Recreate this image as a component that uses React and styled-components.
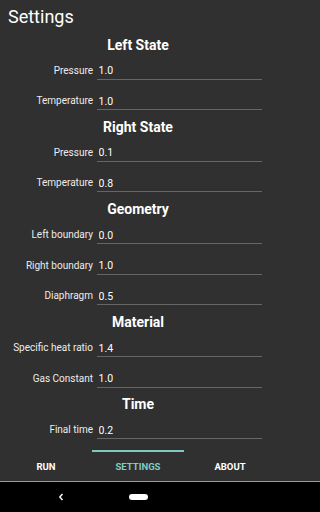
import React from 'react'
import styled, { createGlobalStyle } from 'styled-components'

const GlobalStyle = createGlobalStyle`
  html, body {
    margin: 0;
    padding: 0;
    background: #303030;
  }
  body {
    font-family: Roboto, 'Noto Sans', 'Liberation Sans', sans-serif;
    color: #fff;
  }
`

const Screen = styled.div`
  display: flex;
  flex-direction: column;
  min-width: 276px;
  height: 512px;
  overflow: hidden;
  background: #303030;
`

const Content = styled.div`
  flex: 1 1 auto;
  width: 276px;
  min-height: 0;
  overflow: hidden;
`

const Title = styled.h1`
  margin: 0;
  padding: 5px 0 5.5px 8px;
  font-size: 18px;
  line-height: 24px;
  font-weight: 400;
  color: #fff;
`

const SectionTitle = styled.h2`
  margin: 0;
  height: 21px;
  font-size: 14px;
  line-height: 21px;
  font-weight: 700;
  text-align: center;
  color: #fff;
`

const Row = styled.label`
  display: flex;
  align-items: flex-start;
  height: 30.67px;
`

const Label = styled.span`
  width: 93px;
  padding-top: 9px;
  font-size: 10px;
  line-height: 12px;
  text-align: right;
  color: #ececec;
  white-space: nowrap;
`

const Input = styled.input`
  box-sizing: border-box;
  width: 165px;
  height: 24px;
  margin: 0 0 0 4px;
  padding: 7px 0 0 1.5px;
  border: none;
  border-bottom: 1px solid #666;
  border-radius: 0;
  background: transparent;
  font-family: inherit;
  font-size: 10.5px;
  line-height: 12px;
  color: #fff;
  outline: none;
`

const TabBar = styled.nav`
  display: grid;
  grid-template-columns: repeat(3, 1fr);
  flex: 0 0 31px;
  width: 276px;
  background: #303030;
`

const Tab = styled.div`
  display: flex;
  align-items: center;
  justify-content: center;
  border-top: 2px solid ${({ active }) => (active ? '#7ec8c0' : 'transparent')};
  font-size: 9.5px;
  font-weight: 700;
  text-transform: uppercase;
  color: ${({ active }) => (active ? '#80cbc4' : '#fff')};
`

const SystemNav = styled.div`
  display: grid;
  grid-template-columns: 122px 32px;
  align-items: center;
  flex: 0 0 30px;
  border-top: 1px solid #9a9a9a;
  background: #000;
`

const NavSlot = styled.div`
  display: flex;
  align-items: center;
  justify-content: center;
`

const HomePill = styled.div`
  width: 19px;
  height: 6px;
  border-radius: 3px;
  background: #fff;
`

const sections = [
  {
    title: 'Left State',
    fields: [
      ['Pressure', '1.0'],
      ['Temperature', '1.0'],
    ],
  },
  {
    title: 'Right State',
    fields: [
      ['Pressure', '0.1'],
      ['Temperature', '0.8'],
    ],
  },
  {
    title: 'Geometry',
    fields: [
      ['Left boundary', '0.0'],
      ['Right boundary', '1.0'],
      ['Diaphragm', '0.5'],
    ],
  },
  {
    title: 'Material',
    fields: [
      ['Specific heat ratio', '1.4'],
      ['Gas Constant', '1.0'],
    ],
  },
  {
    title: 'Time',
    fields: [['Final time', '0.2']],
  },
]

const tabs = ['Run', 'Settings', 'About']

export default function App() {
  return (
    <Screen>
      <GlobalStyle />
      <Content>
        <Title>Settings</Title>
        {sections.map((section) => (
          <section key={section.title}>
            <SectionTitle>{section.title}</SectionTitle>
            {section.fields.map(([label, value]) => (
              <Row key={label}>
                <Label>{label}</Label>
                <Input defaultValue={value} />
              </Row>
            ))}
          </section>
        ))}
      </Content>
      <TabBar>
        {tabs.map((tab) => (
          <Tab key={tab} active={tab === 'Settings'}>
            {tab}
          </Tab>
        ))}
      </TabBar>
      <SystemNav>
        <NavSlot>
          <svg width="6" height="8" viewBox="0 0 6 8">
            <path d="M4.5 1 L1.8 4 L4.5 7" fill="none" stroke="#fff" strokeWidth="1.4" />
          </svg>
        </NavSlot>
        <NavSlot>
          <HomePill />
        </NavSlot>
      </SystemNav>
    </Screen>
  )
}
